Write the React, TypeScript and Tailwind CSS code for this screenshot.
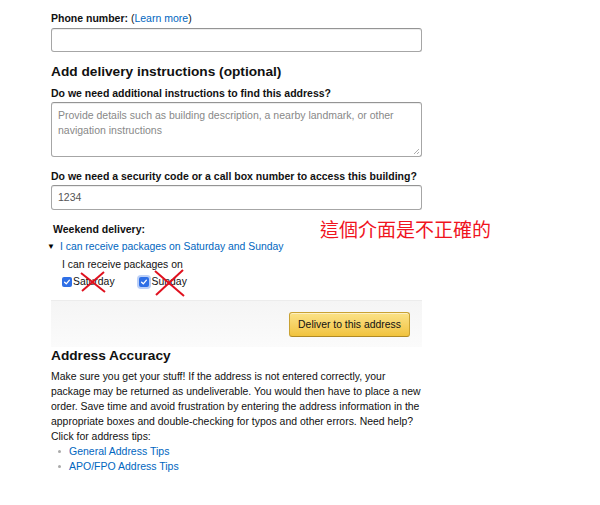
import React from "react";

function Check({ focus }: { focus?: boolean }) {
  return (
    <span className={`relative inline-flex items-center justify-center ${focus ? "rounded-[4px] bg-[#bcd0f7] p-[2px]" : ""}`}>
      <span className="inline-flex h-[10px] w-[10px] items-center justify-center rounded-[2px] bg-[#2f6fe6]">
        <svg width="8" height="8" viewBox="0 0 8 8">
          <path d="M1.6 4.2 L3.3 5.8 L6.4 2.2" stroke="#fff" strokeWidth="1.3" fill="none" strokeLinecap="round" strokeLinejoin="round" />
        </svg>
      </span>
    </span>
  );
}

function Cross({ w, h }: { w: number; h: number }) {
  return (
    <svg width={w} height={h} viewBox={`0 0 ${w} ${h}`} className="pointer-events-none">
      <path d={`M1 2 L${w - 1} ${h - 1}`} stroke="#e0101e" strokeWidth="2" fill="none" />
      <path d={`M${w - 2} 1 L2 ${h - 2}`} stroke="#e0101e" strokeWidth="2" fill="none" />
    </svg>
  );
}

const inputCls =
  "block w-full rounded-[3px] border border-[#a6a6a6] border-t-[#949494] bg-white px-[6px] text-[10.5px] text-[#555] shadow-[inset_0_1px_0_rgba(0,0,0,0.07)]";

export default function App() {
  return (
    <div className="relative min-h-[505px] w-[600px] bg-white font-['Liberation_Sans',Arial,sans-serif] text-[10.5px] text-[#111]">
      <div className="ml-[51px] w-[371px] pt-[11px]">
        <div className="h-[15px] leading-[15px] font-bold">
          Phone number:{" "}
          <span className="font-normal">
            {" "}(<span className="text-[#0066c0]">Learn more</span>)
          </span>
        </div>
        <div className={`${inputCls} mt-[2px] h-[24px]`} />

        <div className="mt-[10px] h-[20px] text-[13.7px] leading-[20px] font-bold">
          Add delivery instructions (optional)
        </div>
        <div className="mt-[4px] h-[15px] leading-[15px] font-bold">
          Do we need additional instructions to find this address?
        </div>
        <div className={`${inputCls} relative mt-[1px] h-[55px] pt-[5px] text-[10.4px] leading-[15px] text-[#888]`}>
          Provide details such as building description, a nearby landmark, or other navigation instructions
          <svg className="absolute right-[1px] bottom-[1px]" width="7" height="7" viewBox="0 0 7 7">
            <path d="M1 6 L6 1 M4 6 L6 4" stroke="#999" strokeWidth="0.8" />
          </svg>
        </div>

        <div className="mt-[12px] h-[15px] leading-[15px] font-bold">
          Do we need a security code or a call box number to access this building?
        </div>
        <div className={`${inputCls} mt-[1px] flex h-[25px] items-center`}>1234</div>

        <div className="mt-[12px] ml-[2px] h-[15px] leading-[15px] font-bold">Weekend delivery:</div>
        <div className="mt-[2px] flex h-[15px] items-center leading-[15px]">
          <span className="-ml-[4px] mr-[5px] text-[8px] text-black">▼</span>
          <span className="text-[10.4px] text-[#0066c0]">I can receive packages on Saturday and Sunday</span>
        </div>
        <div className="mt-[3px] ml-[11px] h-[15px] text-[10.4px] leading-[15px]">I can receive packages on</div>
        <div className="mt-[2px] ml-[11px] flex h-[15px] items-center text-[10.4px] leading-[15px]">
          <span className="relative flex items-center gap-[1px]">
            <Check />
            <span>Saturday</span>
            <span className="absolute left-[18px] top-[-3px]">
              <Cross w={26} h={22} />
            </span>
          </span>
          <span className="relative ml-[22px] flex items-center gap-[1px]">
            <Check focus />
            <span>Sunday</span>
            <span className="absolute left-[17px] top-[-5px]">
              <Cross w={31} h={28} />
            </span>
          </span>
        </div>

        <div className="mt-[11px] flex h-[47px] items-start justify-end border-t border-[#ececec] bg-gradient-to-b from-[#f5f5f5] to-[#fbfbfb] pt-[11px] pr-[12px]">
          <button className="h-[25px] w-[121px] rounded-[3px] border border-[#c9a233] border-b-[#b08a25] bg-gradient-to-b from-[#fbe286] to-[#f1c33c] text-[10.4px] text-[#111] shadow-[inset_0_1px_0_rgba(255,255,255,0.5)]">
            Deliver to this address
          </button>
        </div>

        <div className="h-[18px] text-[13.7px] leading-[18px] font-bold">Address Accuracy</div>
        <p className="mt-[4px] w-[380px] whitespace-nowrap text-[10.45px] leading-[15px]">
          Make sure you get your stuff! If the address is not entered correctly, your
          <br />
          package may be returned as undeliverable. You would then have to place a new
          <br />
          order. Save time and avoid frustration by entering the address information in the
          <br />
          appropriate boxes and double-checking for typos and other errors. Need help?
          <br />
          Click for address tips:
        </p>
        <ul className="leading-[15px]">
          <li className="flex items-center">
            <span className="ml-[7px] mr-[8px] h-[3px] w-[3px] rounded-full bg-[#aaa]" />
            <span className="text-[10.5px] text-[#0066c0]">General Address Tips</span>
          </li>
          <li className="flex items-center">
            <span className="ml-[7px] mr-[8px] h-[3px] w-[3px] rounded-full bg-[#aaa]" />
            <span className="text-[10.5px] text-[#0066c0]">APO/FPO Address Tips</span>
          </li>
        </ul>
      </div>

      <div className="absolute left-[320px] top-[217px] font-['Noto_Sans_CJK_TC','Noto_Sans_CJK_SC',sans-serif] text-[19px] leading-[24px] text-[#f0141e]">
        這個介面是不正確的
      </div>
    </div>
  );
}
